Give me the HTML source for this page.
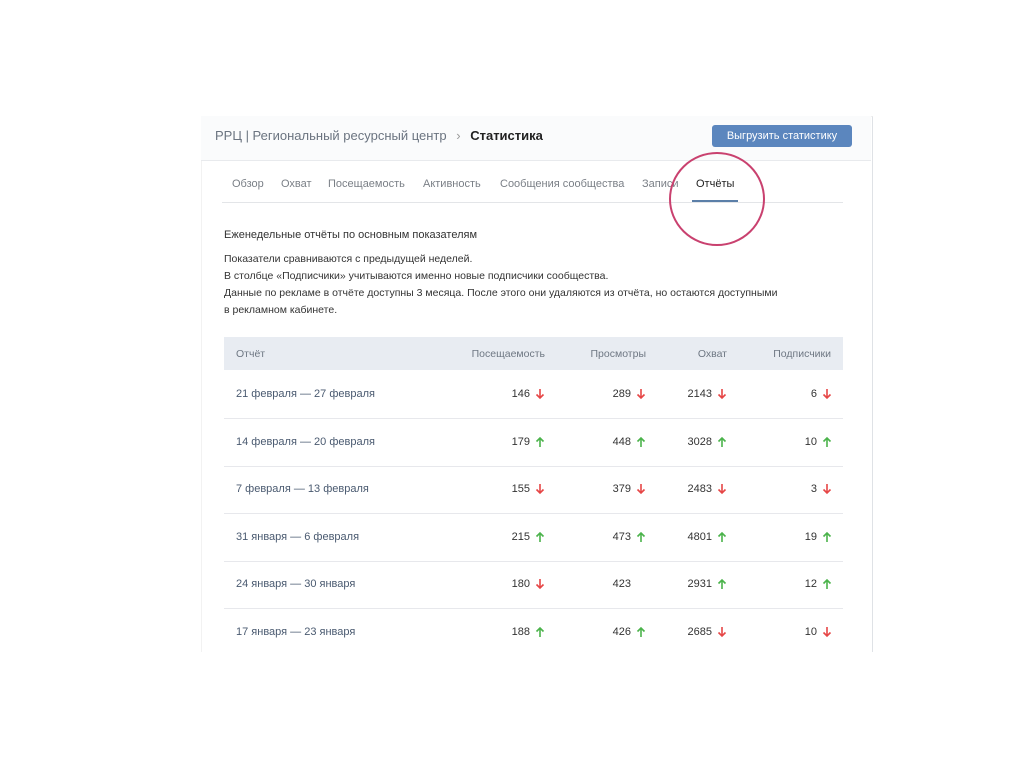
<!DOCTYPE html>
<html><head><meta charset="utf-8"><style>
body{margin:0;width:1024px;height:767px;background:#fff;font-family:"Liberation Sans",sans-serif;position:relative;overflow:hidden;color:#222}
.a{position:absolute;white-space:nowrap}
.card{position:absolute;left:201px;top:116px;width:670px;height:535px;border-right:1px solid #dfe2e6;border-left:1px solid #f2f2f2;border-top:1px solid #f0f0f0}
.hd{position:absolute;left:201px;top:116px;width:670px;height:44px;background:#fafbfc;border-bottom:1px solid #e8eaed}
.btn{left:712px;top:125px;width:140px;height:22px;background:#5b86be;border-radius:3px;color:#fff;font-size:11px;text-align:center;line-height:22px}
.tab{top:178px;font-size:11px;color:#7a7f86}
.p{font-size:10.5px;color:#333}
.th{top:348px;font-size:10.5px;color:#6e7783}
.d{left:236px;font-size:11px;color:#4a5a70;line-height:14px}
.n{font-size:11px;color:#333;text-align:right;line-height:14px}
.sep{position:absolute;left:224px;width:619px;height:1px;background:#e7e8ec}
</style></head><body>
<div class="card"></div>
<div class="hd"></div>
<div class="a" style="left:215px;top:128px;font-size:13px;color:#6b7480">РРЦ | Региональный ресурсный центр <span style="color:#999;margin:0 6px">›</span> <span style="color:#222;font-weight:bold">Статистика</span></div>
<div class="a btn">Выгрузить статистику</div>
<div class="a tab" style="left:232px">Обзор</div>
<div class="a tab" style="left:281px">Охват</div>
<div class="a tab" style="left:328px">Посещаемость</div>
<div class="a tab" style="left:423px">Активность</div>
<div class="a tab" style="left:500px">Сообщения сообщества</div>
<div class="a tab" style="left:642px">Записи</div>
<div class="a tab" style="left:696px;color:#222">Отчёты</div>
<div class="a" style="left:222px;top:202px;width:621px;height:1px;background:#e3e5e8"></div>
<div class="a" style="left:692px;top:200px;width:46px;height:2px;background:#5b7fa8"></div>
<svg class="a" style="left:660px;top:145px" width="110" height="110"><ellipse cx="57" cy="54" rx="47" ry="46" fill="none" stroke="#c9416f" stroke-width="2"/></svg>
<div class="a" style="left:224px;top:229px;font-size:11px;color:#333">Еженедельные отчёты по основным показателям</div>
<div class="a p" style="left:224px;top:253px">Показатели сравниваются с предыдущей неделей.</div>
<div class="a p" style="left:224px;top:270px">В столбце «Подписчики» учитываются именно новые подписчики сообщества.</div>
<div class="a p" style="left:224px;top:287px">Данные по рекламе в отчёте доступны 3 месяца. После этого они удаляются из отчёта, но остаются доступными</div>
<div class="a p" style="left:224px;top:304px">в рекламном кабинете.</div>
<div class="a" style="left:224px;top:337px;width:619px;height:33px;background:#e8ecf2"></div>
<div class="a th" style="left:236px">Отчёт</div>
<div class="a th" style="right:479px">Посещаемость</div>
<div class="a th" style="right:378px">Просмотры</div>
<div class="a th" style="right:297px">Охват</div>
<div class="a th" style="right:193px">Подписчики</div>
<div id="rows"></div>
<script>
var R=[["21 февраля — 27 февраля","146","d","289","d","2143","d","6","d"],
["14 февраля — 20 февраля","179","u","448","u","3028","u","10","u"],
["7 февраля — 13 февраля","155","d","379","d","2483","d","3","d"],
["31 января — 6 февраля","215","u","473","u","4801","u","19","u"],
["24 января — 30 января","180","d","423","","2931","u","12","u"],
["17 января — 23 января","188","u","426","u","2685","d","10","d"]];
var ax=[540,641,722,827],h="";
var UP='<path d="M5 11V2M1.5 5.5L5 2l3.5 3.5" fill="none" stroke="#4bb34b" stroke-width="1.6"/>';
var DN='<path d="M5 1v9M1.5 6.5L5 10l3.5-3.5" fill="none" stroke="#e64646" stroke-width="1.6"/>';
R.forEach(function(r,i){var y=387+i*47.5;
h+='<div class="a d" style="top:'+y+'px">'+r[0]+'</div>';
for(var k=0;k<4;k++){var v=r[1+k*2],s=r[2+k*2];
h+='<div class="a n" style="top:'+y+'px;right:'+(1024-ax[k]+10)+'px">'+v+'</div>';
if(s)h+='<svg class="a" style="left:'+(ax[k]-5)+'px;top:'+(y+1)+'px" width="10" height="12">'+(s=="u"?UP:DN)+'</svg>';}
if(i<5)h+='<div class="sep" style="top:'+(y+31)+'px"></div>';});
document.getElementById("rows").innerHTML=h;
</script>
</body></html>
